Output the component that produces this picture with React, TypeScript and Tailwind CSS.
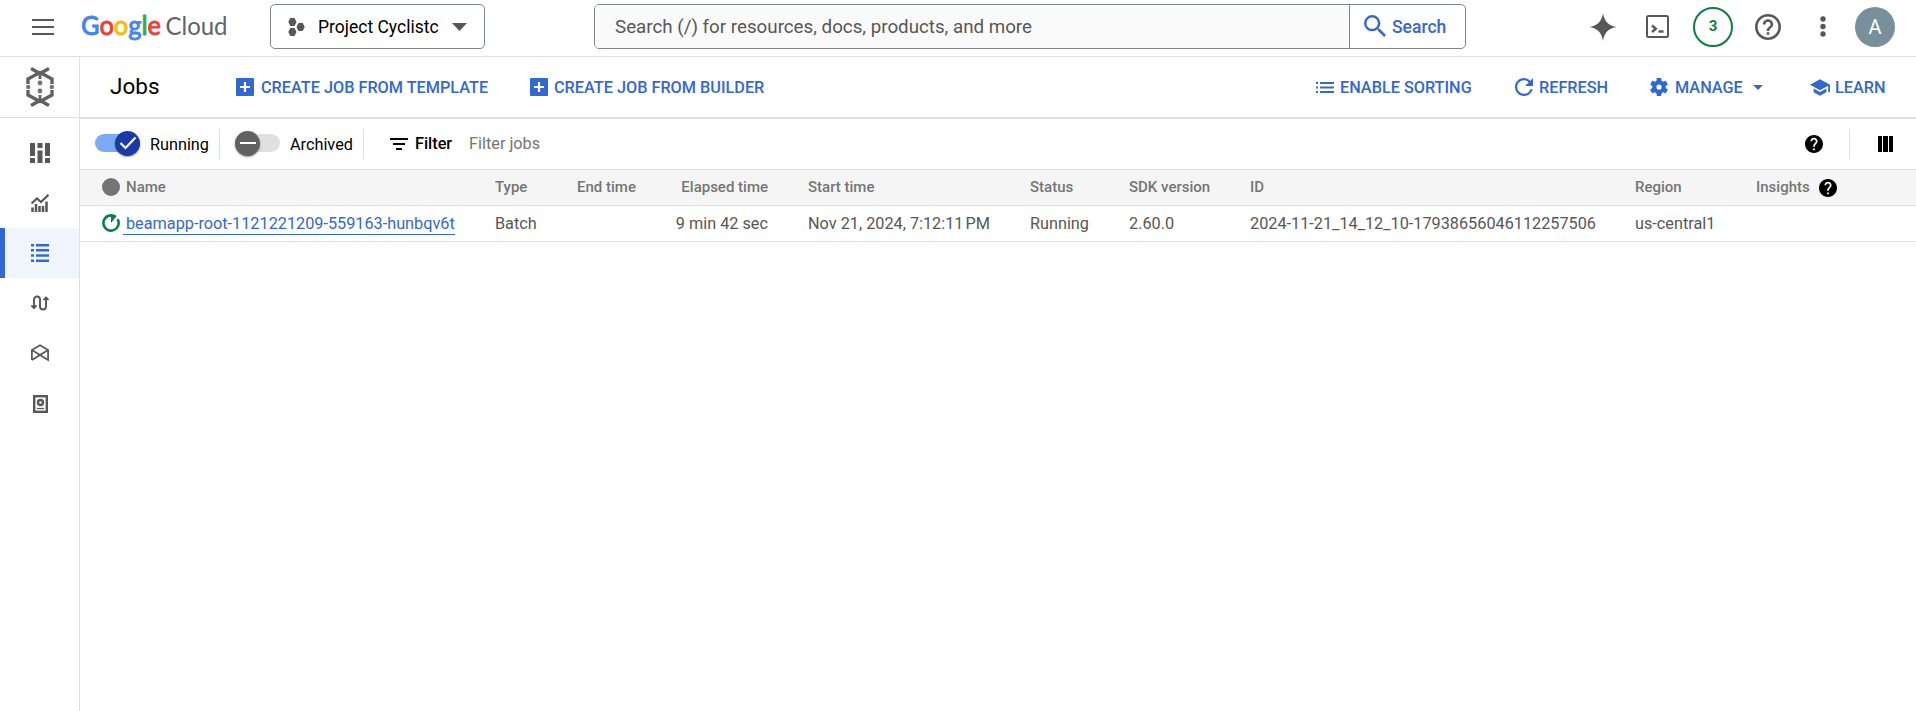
import type { ReactNode } from "react";

const REFRESH =
  "M17.65 6.35A7.958 7.958 0 0 0 12 4c-4.42 0-7.99 3.58-7.99 8s3.57 8 7.99 8c3.73 0 6.84-2.55 7.73-6h-2.08A5.99 5.99 0 0 1 12 18c-3.31 0-6-2.69-6-6s2.69-6 6-6c1.66 0 3.14.69 4.22 1.78L13 11h7V4l-2.35 2.35z";
const GEAR =
  "M19.14 12.94c.04-.3.06-.61.06-.94 0-.32-.02-.64-.07-.94l2.03-1.58a.49.49 0 0 0 .12-.61l-1.92-3.32a.488.488 0 0 0-.59-.22l-2.39.96c-.5-.38-1.03-.7-1.62-.94l-.36-2.54a.484.484 0 0 0-.48-.41h-3.84c-.24 0-.43.17-.47.41l-.36 2.54c-.59.24-1.13.57-1.62.94l-2.39-.96c-.22-.08-.47 0-.59.22L2.74 8.87c-.12.21-.08.47.12.61l2.03 1.58c-.05.3-.09.63-.09.94s.02.64.07.94l-2.03 1.58a.49.49 0 0 0-.12.61l1.92 3.32c.12.22.37.29.59.22l2.39-.96c.5.38 1.03.7 1.62.94l.36 2.54c.05.24.24.41.48.41h3.84c.24 0 .44-.17.47-.41l.36-2.54c.59-.24 1.13-.56 1.62-.94l2.39.96c.22.08.47 0 .59-.22l1.92-3.32c.12-.22.07-.47-.12-.61l-2.01-1.58zM12 14.8a2.8 2.8 0 1 1 0-5.6 2.8 2.8 0 0 1 0 5.6z";
const SCHOOL = "M5 13.18v4L12 21l7-3.82v-4L12 17l-7-3.82zM12 3L1 9l11 6 9-4.91V17h2V9L12 3z";
const HELP =
  "M12 2C6.48 2 2 6.48 2 12s4.48 10 10 10 10-4.48 10-10S17.52 2 12 2zm1 17h-2v-2h2v2zm2.07-7.75l-.9.92C13.45 12.9 13 13.5 13 15h-2v-.5c0-1.1.45-2.1 1.17-2.83l1.24-1.26c.37-.36.59-.86.59-1.41 0-1.1-.9-2-2-2s-2 .9-2 2H8c0-2.21 1.79-4 4-4s4 1.79 4 4c0 .88-.36 1.68-.93 2.25z";
const HELP_OUTLINE =
  "M11 18h2v-2h-2v2zm1-16C6.48 2 2 6.48 2 12s4.48 10 10 10 10-4.48 10-10S17.52 2 12 2zm0 18c-4.41 0-8-3.59-8-8s3.59-8 8-8 8 3.59 8 8-3.59 8-8 8zm0-14c-2.21 0-4 1.79-4 4h2c0-1.1.9-2 2-2s2 .9 2 2c0 2-3 1.75-3 5h2c0-2.25 3-2.5 3-5 0-2.21-1.79-4-4-4z";
const SEARCH =
  "M15.5 14h-.79l-.28-.27A6.471 6.471 0 0 0 16 9.5 6.5 6.5 0 1 0 9.5 16c1.61 0 3.09-.59 4.23-1.57l.27.28v.79l5 4.99L20.49 19l-4.99-5zm-6 0C7.01 14 5 11.99 5 9.5S7.01 5 9.5 5 14 7.01 14 9.5 11.99 14 9.5 14z";

type GlyphProps = { d: string; box: string; className: string };

function Glyph({ d, box, className }: GlyphProps) {
  return (
    <svg viewBox={box} className={`shrink-0 ${className}`} fill="currentColor">
      <path d={d} />
    </svg>
  );
}

function Logo() {
  return (
    <svg className="ml-[28px] h-[40px] w-[148px] shrink-0" viewBox="0 0 148 40">
      <g fontFamily="Lato, sans-serif" fontSize="26.5">
        <text x="-1" y="27.500" textLength="80" lengthAdjust="spacingAndGlyphs" fontWeight="500" strokeWidth="0.8">
          <tspan fill="#4285f4" stroke="#4285f4">G</tspan>
          <tspan fill="#ea4335" stroke="#ea4335">o</tspan>
          <tspan fill="#fbbc04" stroke="#fbbc04">o</tspan>
          <tspan fill="#4285f4" stroke="#4285f4">g</tspan>
          <tspan fill="#34a853" stroke="#34a853">l</tspan>
          <tspan fill="#ea4335" stroke="#ea4335">e</tspan>
        </text>
        <text x="83.500" y="27.500" textLength="62" lengthAdjust="spacingAndGlyphs" fill="#5f6368" fontSize="24.5">
          Cloud
        </text>
      </g>
    </svg>
  );
}

function TopBar() {
  return (
    <header className="flex h-[57px] items-start border-b border-[#e0e0e0] bg-white">
      <div className="flex h-[53px] w-full items-center">
        <div className="ml-[32px] flex w-[22px] shrink-0 flex-col gap-[5px] text-[#575757]">
          <span className="h-[2px] bg-current" />
          <span className="h-[2px] bg-current" />
          <span className="h-[2px] bg-current" />
        </div>
        <Logo />
        <button className="ml-[40px] flex h-[45px] w-[215px] shrink-0 items-center rounded-[5px] border border-[#80868b] pl-[17px] text-[17.5px] text-black">
          <svg viewBox="0 0 17 18" className="h-[18px] w-[17px] shrink-0" fill="#575757">
            <path d="M2.3 0h4.2l2 4-2 4H2.3l-2-4zM2.3 10h4.2l2 4-2 4H2.3l-2-4zM10.5 5h4.2l2 4-2 4h-4.2l-2-4z" />
          </svg>
          <span className="ml-[13px] pt-[2px] whitespace-nowrap">Project Cyclistc</span>
          <svg viewBox="0 0 15 8" className="ml-[13px] h-[8px] w-[15px] shrink-0" fill="#575757">
            <path d="M0 0h15L7.500 8z" />
          </svg>
        </button>
        <div className="ml-[109px] flex h-[45px] w-[872px] shrink-0 overflow-hidden rounded-[5px] border border-[#80868b]">
          <div className="flex w-[755px] items-center border-r border-[#80868b] bg-[#fafafa] pt-px pl-[20px] text-[18.75px] text-[#575757]">
            Search (/) for resources, docs, products, and more
          </div>
          <div className="flex items-center pl-[14px] text-[#3367d6]">
            <Glyph d={SEARCH} box="3 3 17.500 17.500" className="mb-px h-[22px] w-[22px]" />
            <span className="ml-[6px] pt-[2px] text-[17.5px] font-medium">Search</span>
          </div>
        </div>
        <svg viewBox="0 0 28 28" className="ml-[123px] h-[28px] w-[28px] shrink-0" fill="#575757">
          <path d="M14 0C15.200 8.500 19.500 12.800 28 14 19.500 15.200 15.200 19.500 14 28 12.800 19.500 8.500 15.200 0 14 8.500 12.800 12.800 8.500 14 0z" />
        </svg>
        <svg viewBox="0 0 23 23" className="ml-[29px] h-[23px] w-[23px] shrink-0" fill="none" stroke="#575757" strokeWidth="2">
          <rect x="1" y="1" width="21" height="21" rx="1.500" />
          <path d="M6 10.500l3.800 3.300L6 17" strokeWidth="2.400" />
          <path d="M12.500 16.500h5" strokeWidth="2.400" />
        </svg>
        <div className="ml-[24px] flex h-[40px] w-[40px] shrink-0 items-center justify-center rounded-full border-2 border-[#0b8043] text-[15px] font-bold text-[#0b8043]">
          3
        </div>
        <Glyph d={HELP_OUTLINE} box="2 2 20 20" className="ml-[22px] h-[26px] w-[26px] text-[#575757]" />
        <svg viewBox="0 0 6 21" className="ml-[39px] h-[21px] w-[6px] shrink-0" fill="#575757">
          <circle cx="3" cy="3" r="2.700" />
          <circle cx="3" cy="10.500" r="2.700" />
          <circle cx="3" cy="18" r="2.700" />
        </svg>
        <div className="ml-[29px] flex h-[40px] w-[40px] shrink-0 items-center justify-center rounded-full bg-[#78909c] pt-px text-[20px] text-white">
          A
        </div>
      </div>
    </header>
  );
}

function NavItem({ active, children }: { active?: boolean; children: ReactNode }) {
  return (
    <div
      className={
        active
          ? "flex h-[50px] items-center justify-center border-l-[5px] border-[#3367d6] bg-[#f0f5ff] pr-[4px] text-[#3367d6]"
          : "flex h-[50px] items-center justify-center pl-px text-[#575757]"
      }
    >
      {children}
    </div>
  );
}

function Sidebar() {
  return (
    <nav className="flex w-[80px] shrink-0 flex-col border-r border-[#e0e0e0]">
      <div className="flex h-[61px] items-center justify-center border-b border-[#e0e0e0] pl-px">
        <svg viewBox="0 0 28 40" className="h-[40px] w-[28px]" fill="none" stroke="#616161" strokeWidth="3.400">
          <path d="M5 1.500l9 5 9-5M2 17v-5l12-6.500L26 12v5" />
          <path d="M5 38.500l9-5 9 5M2 23v5l12 6.500L26 28v-5" />
          <path d="M14 5v7M14 28v7" strokeWidth="2.800" />
          <g fill="#757575" stroke="none">
            <circle cx="14" cy="16" r="2.400" />
            <circle cx="14" cy="24" r="2.400" />
            <circle cx="2.200" cy="20" r="2.200" />
            <circle cx="25.800" cy="20" r="2.200" />
          </g>
        </svg>
      </div>
      <div className="pt-[10px]">
        <NavItem>
          <svg viewBox="0 0 20 20" className="h-[20px] w-[20px]" fill="currentColor">
            <path d="M0 0h5v13H0zM0 15h5v5H0zM7.500 0h5v5h-5zM7.500 7.500h5V20h-5zM15 0h5v13h-5zM15 15h5v5h-5z" />
          </svg>
        </NavItem>
        <NavItem>
          <svg viewBox="0 0 18 18" className="h-[18px] w-[18px]" fill="none" stroke="currentColor">
            <path d="M.5 9.500L6 4.500l4 3.500L17.500.800" strokeWidth="2.200" />
            <path d="M1.500 18v-4.500M5 18V10M8.500 18v-6M12 18v-6M15.500 18V7.500" strokeWidth="2.500" />
          </svg>
        </NavItem>
        <NavItem active>
          <svg viewBox="0 0 18 18" className="h-[18px] w-[18px]" fill="currentColor">
            <path d="M0 0h3v2.500H0zM0 5h3v2.500H0zM0 10.200h3v2.500H0zM0 15.500h3V18H0zM5 0h13v2.500H5zM5 5h13v2.500H5zM5 10.200h13v2.500H5zM5 15.500h13V18H5z" />
          </svg>
        </NavItem>
        <NavItem>
          <svg viewBox="0 0 18 16" className="h-[16px] w-[18px]" fill="none" stroke="currentColor" strokeWidth="1.900">
            <path d="M3 13V4.500a3 3 0 0 1 6 0v7a3 3 0 0 0 6 0V3" />
            <path d="M0 10.500h6L3 14zM12 5h6l-3-3.500z" fill="currentColor" stroke="none" />
            <path d="M.5 10.500L3 13l2.500-2.500M12.500 5L15 2.500 17.500 5" strokeWidth="1.600" />
          </svg>
        </NavItem>
        <NavItem>
          <svg viewBox="0 0 18 18" className="h-[18px] w-[18px]" fill="none" stroke="currentColor" strokeWidth="1.700">
            <path d="M.9 16V6L9 1.200 17.100 6v10L.9 6M.9 16L17.100 6" />
          </svg>
        </NavItem>
        <NavItem>
          <svg viewBox="0 0 15 18" className="mt-px h-[18px] w-[15px]" fill="none" stroke="currentColor">
            <rect x="1.200" y="1.200" width="12.600" height="15.600" strokeWidth="2.400" />
            <circle cx="7.500" cy="7.500" r="2.500" strokeWidth="2.400" />
            <path d="M4 13.500h7" strokeWidth="1.300" />
          </svg>
        </NavItem>
      </div>
    </nav>
  );
}

function AddIcon() {
  return (
    <svg viewBox="0 0 18 18" className="h-[18px] w-[18px] shrink-0" fill="#3367d6">
      <rect width="18" height="18" rx="1" />
      <path d="M9 4v10M4 9h10" stroke="#fff" strokeWidth="2.200" />
    </svg>
  );
}

function ListIcon() {
  return (
    <svg viewBox="0 0 18 11" className="h-[11px] w-[18px] shrink-0" fill="currentColor">
      <path d="M0 0h2v2H0zM0 4.500h2v2H0zM0 9h2v2H0zM4 0h14v2H4zM4 4.500h14v2H4zM4 9h14v2H4z" />
    </svg>
  );
}

function ActionBar() {
  return (
    <div className="flex h-[62px] items-center border-b-2 border-[#e0e0e0] text-[16.25px] font-medium whitespace-nowrap text-[#3367d6]">
      <h1 className="w-[126px] pl-[30px] text-[22.5px] font-normal text-black">Jobs</h1>
      <div className="flex w-[294px] items-center gap-[7px] pl-[30px]">
        <AddIcon />
        <span className="pt-[2px]">CREATE JOB FROM TEMPLATE</span>
      </div>
      <div className="flex items-center gap-[6px] pl-[30px]">
        <AddIcon />
        <span className="pt-[2px]">CREATE JOB FROM BUILDER</span>
      </div>
      <div className="ml-auto flex w-[199px] items-center gap-[6px]">
        <ListIcon />
        <span className="pt-[2px]">ENABLE SORTING</span>
      </div>
      <div className="flex w-[135px] items-center gap-[6px]">
        <Glyph d={REFRESH} box="4 4 16 16" className="h-[18px] w-[18px]" />
        <span className="pt-[2px]">REFRESH</span>
      </div>
      <div className="flex w-[160px] items-center gap-[7px]">
        <Glyph d={GEAR} box="2.500 2.400 19 19.200" className="h-[18px] w-[18px]" />
        <span className="pt-[2px]">MANAGE</span>
        <svg viewBox="0 0 10 5" className="ml-[3px] h-[5px] w-[10px]" fill="currentColor">
          <path d="M0 0h10L5 5z" />
        </svg>
      </div>
      <div className="flex w-[106px] items-center gap-[5px]">
        <Glyph d={SCHOOL} box="1 3 22 18" className="h-[17px] w-[20px]" />
        <span className="pt-[3px]">LEARN</span>
      </div>
    </div>
  );
}

function FilterBar() {
  return (
    <div className="flex h-[50px] items-center pl-[15px] text-[16.25px] text-black">
      <div className="flex h-[30px] w-[125px] items-center border-r border-[#e0e0e0]">
        <div className="mb-[2px] flex h-[18px] w-[45px] shrink-0 items-center justify-end rounded-full bg-[#7baaf7]">
          <div className="flex h-[25px] w-[25px] items-center justify-center rounded-full bg-[#1a3aa8] shadow-[0_1px_2px_rgba(0,0,0,0.4)]">
            <svg viewBox="0 0 18 14" className="h-[14px] w-[18px]" fill="none" stroke="#fff" strokeWidth="2.200">
              <path d="M1.500 7l5 5L16.500 1.500" />
            </svg>
          </div>
        </div>
        <span className="ml-[10px] pt-[2px]">Running</span>
      </div>
      <div className="flex h-[30px] w-[144px] items-center border-r border-[#e0e0e0] pl-[15px]">
        <div className="mb-[2px] flex h-[18px] w-[45px] shrink-0 items-center rounded-full bg-[#e0e0e0]">
          <div className="flex h-[25px] w-[25px] items-center justify-center rounded-full bg-[#616161] shadow-[0_1px_2px_rgba(0,0,0,0.4)]">
            <span className="h-[2px] w-[16px] bg-white" />
          </div>
        </div>
        <span className="ml-[10px] pt-[2px]">Archived</span>
      </div>
      <div className="ml-[26px] flex w-[18px] flex-col items-center gap-[3px]">
        <span className="h-[2px] w-[18px] bg-black" />
        <span className="h-[2px] w-[12px] bg-black" />
        <span className="h-[2px] w-[6px] bg-black" />
      </div>
      <span className="ml-[7px] font-medium">Filter</span>
      <span className="ml-[17px] text-[#757575]">Filter jobs</span>
      <Glyph d={HELP} box="2 2 20 20" className="ml-auto h-[18px] w-[18px]" />
      <span className="ml-[26px] h-[30px] w-px bg-[#e0e0e0]" />
      <div className="mr-[23px] ml-[28px] flex h-[16px] w-[15px] gap-px">
        <span className="flex-1 bg-black" />
        <span className="flex-1 bg-black" />
        <span className="flex-1 bg-black" />
      </div>
    </div>
  );
}

const COLS =
  "grid h-[36px] grid-cols-[46px_369px_82px_91px_100px_40px_222px_99px_121px_385px_121px_1fr] items-center border-b border-[#e0e0e0] whitespace-nowrap";

function JobsTable() {
  return (
    <div className="border-t border-[#e0e0e0]">
      <div className={`${COLS} bg-[#f5f5f5] text-[15px] font-medium text-[#757575]`}>
        <span className="mb-px ml-[22px] h-[18px] w-[18px] rounded-full bg-[#757575]" />
        <span>Name</span>
        <span>Type</span>
        <span>End time</span>
        <span className="text-right">Elapsed time</span>
        <span />
        <span>Start time</span>
        <span>Status</span>
        <span>SDK version</span>
        <span>ID</span>
        <span>Region</span>
        <span className="flex items-center gap-[9px]">
          Insights
          <Glyph d={HELP} box="2 2 20 20" className="h-[18px] w-[18px] text-black" />
        </span>
      </div>
      <div className={`${COLS} text-[16.25px] text-[#575757]`}>
        <svg viewBox="0 0 18 18" className="mb-px ml-[22px] h-[18px] w-[18px]" fill="none" stroke="#0b8043">
          <path d="M9 1.400A7.600 7.600 0 1 0 15.600 5.200" strokeWidth="2.600" />
          <path d="M9 0c2.200 0 4.200.800 5.800 2.100L9 9z" fill="#0b8043" stroke="none" />
        </svg>
        <a className="-ml-[3px] h-[22px] w-[332px] border-b border-[#3367d6] pl-[3px] leading-[22px] text-[#3367d6]">
          beamapp-root-1121221209-559163-hunbqv6t
        </a>
        <span className="pt-[2px]">Batch</span>
        <span />
        <span className="pt-[2px] text-right">9 min 42 sec</span>
        <span />
        <span className="pt-[2px]">
          Nov 21, 2024, 7:12:11<span className="inline-block w-[2px]" />PM
        </span>
        <span className="pt-[2px]">Running</span>
        <span className="pt-[2px]">2.60.0</span>
        <span className="pt-[2px]">2024-11-21_14_12_10-17938656046112257506</span>
        <span className="pt-[2px]">us-central1</span>
        <span />
      </div>
    </div>
  );
}

export default function App() {
  return (
    <div className="flex h-[711px] w-[1916px] flex-col overflow-hidden bg-white font-[Roboto,sans-serif]">
      <TopBar />
      <div className="flex flex-1">
        <Sidebar />
        <main className="flex min-w-0 flex-1 flex-col">
          <ActionBar />
          <FilterBar />
          <JobsTable />
        </main>
      </div>
    </div>
  );
}
